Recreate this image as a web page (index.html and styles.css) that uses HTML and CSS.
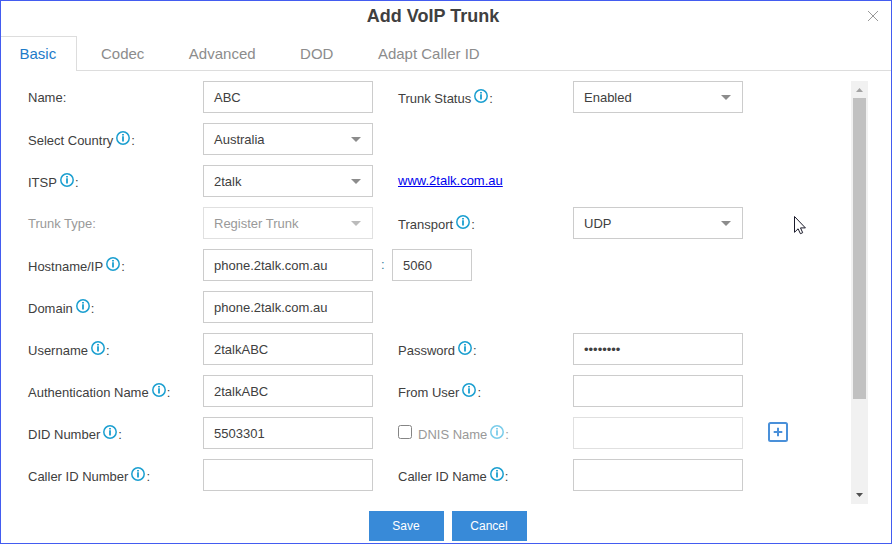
FILE: index.html
```html
<!DOCTYPE html>
<html lang="en">
<head>
<meta charset="utf-8">
<title>Add VoIP Trunk</title>
<link rel="stylesheet" href="styles.css">
</head>
<body>
<svg class="defs" width="0" height="0">
  <symbol id="info" viewBox="0 0 14 14">
    <circle cx="7" cy="7" r="6.2" fill="none" stroke="currentColor" stroke-width="1.5"/>
    <path d="M6.1 3h1.8v1.5H6.1zM6.1 5.2h1.8v5.3H6.1z" fill="currentColor"/>
  </symbol>
  <symbol id="caret" viewBox="0 0 10 5"><path d="M0 0h10L5 5z" fill="currentColor"/></symbol>
</svg>
<div class="dialog">
  <header class="header">
    <h1>Add VoIP Trunk</h1>
    <svg class="close" width="12" height="12" viewBox="0 0 12 12"><path d="M1 1l10 10M11 1L1 11" stroke="#999" stroke-width="1" fill="none"/></svg>
  </header>
  <nav class="tabs">
    <a class="tab active">Basic</a>
    <a class="tab codec">Codec</a>
    <a class="tab advanced">Advanced</a>
    <a class="tab dod">DOD</a>
    <a class="tab">Adapt Caller ID</a>
  </nav>
  <main class="content">
    <div class="form">
      <div class="row">
        <label class="plain">Name:</label><div class="field">ABC</div>
        <label>Trunk Status<svg class="info"><use href="#info"/></svg>:</label><div class="field">Enabled<svg class="caret"><use href="#caret"/></svg></div>
      </div>
      <div class="row">
        <label>Select Country<svg class="info"><use href="#info"/></svg>:</label><div class="field">Australia<svg class="caret"><use href="#caret"/></svg></div>
      </div>
      <div class="row">
        <label>ITSP<svg class="info"><use href="#info"/></svg>:</label><div class="field">2talk<svg class="caret"><use href="#caret"/></svg></div>
        <a class="link">www.2talk.com.au</a>
      </div>
      <div class="row">
        <label class="plain disabled">Trunk Type:</label><div class="field disabled">Register Trunk<svg class="caret"><use href="#caret"/></svg></div>
        <label>Transport<svg class="info"><use href="#info"/></svg>:</label><div class="field">UDP<svg class="caret"><use href="#caret"/></svg></div>
      </div>
      <div class="row">
        <label>Hostname/IP<svg class="info"><use href="#info"/></svg>:</label><div class="field">phone.2talk.com.au</div>
        <div class="port"><span class="colon">:</span><div class="field">5060</div></div>
      </div>
      <div class="row">
        <label>Domain<svg class="info"><use href="#info"/></svg>:</label><div class="field">phone.2talk.com.au</div>
      </div>
      <div class="row">
        <label>Username<svg class="info"><use href="#info"/></svg>:</label><div class="field">2talkABC</div>
        <label>Password<svg class="info"><use href="#info"/></svg>:</label><div class="field secret">••••••••</div>
      </div>
      <div class="row">
        <label>Authentication Name<svg class="info"><use href="#info"/></svg>:</label><div class="field">2talkABC</div>
        <label>From User<svg class="info"><use href="#info"/></svg>:</label><div class="field"></div>
      </div>
      <div class="row">
        <label>DID Number<svg class="info"><use href="#info"/></svg>:</label><div class="field">5503301</div>
        <label class="disabled"><span class="checkbox"></span>DNIS Name<svg class="info"><use href="#info"/></svg>:</label><div class="field disabled"></div>
        <svg class="add" width="20" height="20" viewBox="0 0 20 20"><rect x="1" y="1" width="18" height="18" rx="1.5" fill="none" stroke="#4a90d9" stroke-width="2"/><path d="M10 5.7v8.6M5.7 10h8.6" stroke="#4a90d9" stroke-width="2"/></svg>
      </div>
      <div class="row">
        <label>Caller ID Number<svg class="info"><use href="#info"/></svg>:</label><div class="field"></div>
        <label>Caller ID Name<svg class="info"><use href="#info"/></svg>:</label><div class="field"></div>
      </div>
    </div>
    <div class="scrollbar">
      <svg class="arrow" viewBox="0 0 17 17"><path d="M5 11h7L8.5 7z" fill="#a3a3a3"/></svg>
      <div class="thumb"></div>
      <svg class="arrow" viewBox="0 0 17 17"><path d="M5 6h7L8.5 10z" fill="#505050"/></svg>
    </div>
  </main>
  <footer class="footer"><button>Save</button><button>Cancel</button></footer>
  <svg class="cursor" width="14" height="21" viewBox="0 0 14 21"><path d="M2.5 2.5v15.8l3.6-3.5 2.3 4.9 2.3-1-2.2-4.8h4.9z" fill="#fff" stroke="#1a1a2a" stroke-width="1"/></svg>
</div>
</body>
</html>
```
FILE: styles.css
```css
* { box-sizing: border-box; }
body { margin: 0; font-family: "Liberation Sans", Arial, sans-serif; font-size: 13px; color: #404040; }
.defs { position: absolute; }
.dialog { position: relative; display: flex; flex-direction: column; width: 892px; height: 544px; border: 1px solid #435cf0; background: #fff; overflow: hidden; }
.header { position: relative; height: 35px; flex: none; padding-right: 26px; text-align: center; }
h1 { margin: 0; font-size: 18px; line-height: 30px; font-weight: bold; }
.close { position: absolute; right: 12px; top: 9px; }
.tabs { display: flex; height: 35px; flex: none; border-bottom: 1px solid #ddd; font-size: 15px; line-height: 35px; color: #8c8c8c; }
.tab { white-space: nowrap; margin-right: 44.5px; }
.tab.active { width: 76px; height: 35px; margin-right: 24px; padding-left: 18.5px; border-top: 1px solid #ddd; border-right: 1px solid #ddd; background: #fff; color: #1d7bc9; line-height: 33px; }
.content { display: flex; height: 423px; margin-top: 10px; padding: 0 23px 0 27px; flex: none; justify-content: space-between; }
.form { display: grid; grid-auto-rows: 32px; row-gap: 10px; height: 410px; }
.row { display: grid; grid-template-columns: 175px 170px 200px 170px 45px; }
.row > label { display: flex; align-items: center; padding-top: 3px; white-space: nowrap; }
.row > label.plain { padding-top: 1px; }
.row > label:nth-child(3), .link { margin-left: 25px; }
.info { width: 14px; height: 14px; margin: -6px 1px 0 3px; color: #1b9fd0; flex: none; }
.field { display: flex; align-items: center; justify-content: space-between; height: 32px; padding: 0 11px 0 10px; border: 1px solid #ccc; background: #fff; white-space: nowrap; }
.caret { width: 10px; height: 5px; color: #8c8c8c; }
.disabled { color: #999; }
.field.disabled { border-color: #e0e0e0; }
.disabled .caret { color: #bbb; }
.disabled .info { color: #7accea; }
.link { align-self: center; justify-self: start; margin-top: -2px; color: #0000ee; text-decoration: underline; }
.port { display: flex; margin-left: 8px; }
.colon { width: 11px; padding-left: 0; line-height: 31px; color: #3c7d9c; }
.port .field { width: 80px; }
.checkbox { width: 14px; height: 14px; margin: -6px 6px 0 0; border: 1px solid #858585; border-radius: 2.5px; background: #fff; }
.add { margin: 5px 0 0 25px; }
.scrollbar { display: flex; flex-direction: column; width: 17px; background: #f1f1f1; }
.arrow { width: 17px; height: 17px; flex: none; }
.thumb { width: 13px; height: 301px; margin: 0 2px auto; background: #c1c1c1; }
.footer { display: flex; justify-content: center; gap: 8px; margin-top: 7px; padding-left: 3px; }
button { width: 75px; height: 30px; padding: 0; border: 0; background: #388ad8; color: #fff; font: 12px "Liberation Sans", Arial, sans-serif; }
.cursor { position: absolute; left: 791px; top: 213px; }
```
